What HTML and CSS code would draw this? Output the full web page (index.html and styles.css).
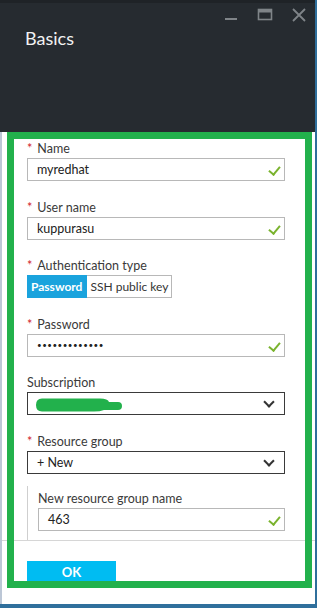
FILE: index.html
```html
<!DOCTYPE html>
<html>
<head>
  <meta charset="UTF-8">
  <title>Basics</title>
  <link rel="stylesheet" href="styles.css">
</head>
<body>
  <div class="window">
    <div class="blade-header">
      <div class="controls">
        <svg width="14" height="14" viewBox="0 0 14 14"><rect x="1" y="10" width="12" height="2" fill="#7f8488"/></svg>
        <svg width="16" height="14" viewBox="0 0 16 14"><rect x="1.5" y="1.5" width="13" height="10" fill="none" stroke="#7f8488" stroke-width="1.6"/><rect x="1.5" y="1.5" width="13" height="3" fill="#7f8488"/></svg>
        <svg width="14" height="14" viewBox="0 0 14 14"><path d="M1 1 L13 13 M13 1 L1 13" stroke="#7f8488" stroke-width="1.8"/></svg>
      </div>
      <h1 class="title">Basics</h1>
    </div>

    <div class="blade-body">
      <div class="form">
        <div class="field">
          <label class="label"><span class="req">*</span>Name</label>
          <div class="input">myredhat<span class="ok-mark"></span></div>
        </div>
        <div class="field">
          <label class="label"><span class="req">*</span>User name</label>
          <div class="input">kuppurasu<span class="ok-mark"></span></div>
        </div>
        <div class="field">
          <label class="label"><span class="req">*</span>Authentication type</label>
          <div class="toggle">
            <span class="toggle-opt active">Password</span>
            <span class="toggle-opt">SSH public key</span>
          </div>
        </div>
        <div class="field">
          <label class="label"><span class="req">*</span>Password</label>
          <div class="input dots">&#8226;&#8226;&#8226;&#8226;&#8226;&#8226;&#8226;&#8226;&#8226;&#8226;&#8226;&#8226;&#8226;<span class="ok-mark"></span></div>
        </div>
        <div class="field">
          <label class="label">Subscription</label>
          <div class="select">
            <svg class="scribble" width="90" height="16" viewBox="0 0 90 16"><path d="M8 1.5 H66 Q74 1.5 75 5 H84 Q88 5 88 9 Q88 13 84 13 H70 Q66 14.5 60 14.5 H8 Q2 14.5 2 8 Q2 1.5 8 1.5 Z" fill="#22b14c"/></svg>
            <span class="chevron"></span>
          </div>
        </div>
        <div class="field">
          <label class="label"><span class="req">*</span>Resource group</label>
          <div class="select">+ New<span class="chevron"></span></div>
        </div>
        <div class="sub-section">
          <label class="label">New resource group name</label>
          <div class="input">463<span class="ok-mark"></span></div>
        </div>
      </div>
      <div class="footer">
        <button class="ok-btn">OK</button>
      </div>
    </div>

    <!-- green annotation frame drawn over the screenshot -->
    <div class="highlight"></div>
  </div>
</body>
</html>
```

FILE: styles.css
```css
body {
  margin: 0;
  background: #2f6f9c;
  font-family: Lato, "Open Sans", sans-serif;
  color: #333;
}
.window {
  position: relative;
  width: 315px;
  height: 604px;
  display: flex;
  flex-direction: column;
}
.blade-header {
  height: 129px;
  background: #262b30;
  border-top: 3px solid #1f2327;
  padding: 0 0 0 25px;
}
.controls {
  display: flex;
  justify-content: flex-end;
  gap: 19px;
  padding: 5px 9px 0 0;
}
.title {
  margin: 5px 0 0 0;
  font-size: 18px;
  font-weight: 400;
  color: #f2f2f2;
}
.blade-body {
  flex: 1;
  background: #fff;
  border-left: 2px solid #bcc7d6;
  display: flex;
  flex-direction: column;
}
.form {
  padding: 7px 0 0 25px;
}
.field {
  margin-bottom: 16.5px;
}
.label {
  display: block;
  font-size: 12.5px;
  line-height: 19px;
  color: #3a3a3a;
}
.req {
  color: #d0242c;
  margin-right: 5px;
}
.input, .select {
  position: relative;
  box-sizing: border-box;
  width: 258px;
  height: 23px;
  border: 1px solid #b8b8b8;
  padding: 0 9px;
  font-size: 12.5px;
  line-height: 21px;
  color: #222;
}
.dots {
  font-size: 8px;
  letter-spacing: 0.5px;
}
.ok-mark {
  position: absolute;
  right: 6px;
  top: 5px;
  width: 5px;
  height: 9px;
  border-right: 2px solid #7ab32e;
  border-bottom: 2px solid #7ab32e;
  transform: rotate(40deg);
}
.select {
  border-color: #3a3a3a;
  padding-left: 9px;
}
.scribble {
  position: absolute;
  left: 6px;
  top: 4px;
}
.chevron {
  position: absolute;
  right: 11px;
  top: 5px;
  width: 6px;
  height: 6px;
  border-right: 2px solid #333;
  border-bottom: 2px solid #333;
  transform: rotate(45deg);
}
.toggle {
  display: flex;
  height: 23px;
}
.toggle-opt {
  box-sizing: border-box;
  padding: 0 3px;
  font-size: 12px;
  line-height: 21px;
  border: 1px solid #b8b8b8;
  border-left: none;
  color: #333;
}
.toggle-opt.active {
  background: #1aa3dd;
  border-color: #1aa3dd;
  color: #fff;
  font-weight: 700;
  padding: 0 4px;
}
.sub-section {
  margin-top: -4px;
  border-left: 1px solid #cfcfcf;
  padding: 3px 0 9px 10px;
}
.sub-section .input {
  width: 247px;
}
.footer {
  border-top: 1px solid #d6d6d6;
  padding: 20px 0 0 25px;
}
.ok-btn {
  width: 89px;
  height: 26px;
  border: none;
  background: #00bcf2;
  color: #fff;
  font-family: Lato, sans-serif;
  font-weight: 700;
  font-size: 13px;
  padding: 0 0 4px 0;
}
.highlight {
  position: absolute;
  left: 7px;
  top: 132px;
  width: 305px;
  height: 456px;
  box-sizing: border-box;
  border: 7px solid #22b14c;
  pointer-events: none;
}
```
